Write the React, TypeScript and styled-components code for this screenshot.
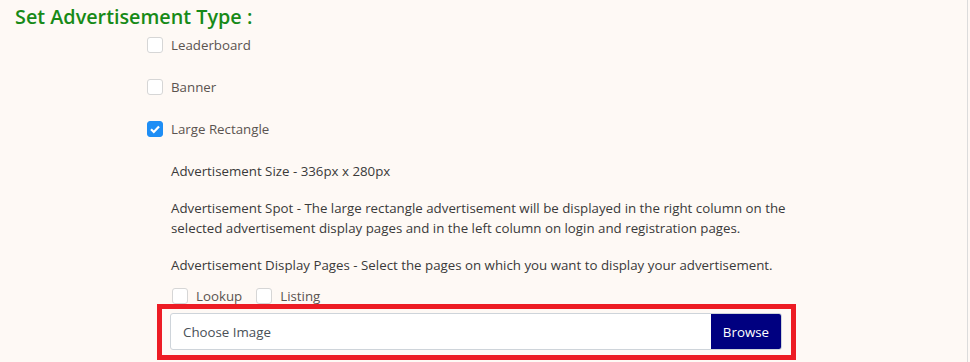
import styled, { createGlobalStyle } from "styled-components";

const GlobalStyle = createGlobalStyle`
  html, body {
    margin: 0;
    padding: 0;
    background: #fef9f5;
  }
`;

const Page = styled.div`
  width: 968px;
  height: 362px;
  box-sizing: border-box;
  border-right: 1px solid #dcdcdc;
  background: #fef9f5;
  font-family: "Open Sans", "Noto Sans", sans-serif;
  color: #333;
  overflow: hidden;
`;

const Heading = styled.h2`
  margin: 0;
  padding: 4px 0 0 15px;
  height: 26px;
  font-size: 19.8px;
  font-weight: 600;
  line-height: 26px;
  color: #178a17;
`;

const Options = styled.div`
  display: flex;
  flex-direction: column;
  gap: 26px;
  padding: 7px 0 0 147px;
`;

const Option = styled.label<{ $inline?: boolean }>`
  display: flex;
  align-items: center;
  gap: 8px;
  height: 16px;
  font-size: 13.3px;
  color: #5b5450;
  margin-right: ${(p) => (p.$inline ? "14px" : "0")};
`;

const Box = styled.span<{ $checked?: boolean }>`
  width: 16px;
  height: 16px;
  box-sizing: border-box;
  border-radius: 3px;
  border: 1px solid ${(p) => (p.$checked ? "#1e8ef5" : "#d6d6d6")};
  background: ${(p) => (p.$checked ? "#1e8ef5" : "#fff")};
  display: flex;
  align-items: center;
  justify-content: center;
  flex: none;
`;

const Details = styled.div`
  padding: 24px 0 0 171px;
  width: 660px;
  font-size: 13.3px;
  line-height: 20px;
  color: #3a3a3a;
`;

const Para = styled.p`
  margin: 0 0 17px;
`;

const PageChoices = styled.div`
  display: flex;
  padding-left: 1px;
  margin-top: -4px;
`;

const Highlight = styled.div`
  margin: 0 0 0 157px;
  width: 639px;
  height: 56px;
  box-sizing: border-box;
  border: 5px solid #ed1c24;
  padding: 4px 9px 5px 8px;
`;

const FileInput = styled.div`
  display: flex;
  height: 37px;
  box-sizing: border-box;
  border: 1px solid #ced4da;
  border-radius: 3px;
  background: #fff;
  overflow: hidden;
`;

const FileLabel = styled.div`
  flex: 1;
  display: flex;
  align-items: center;
  padding-left: 12px;
  font-size: 13.3px;
  color: #495057;
`;

const BrowseButton = styled.div`
  display: flex;
  align-items: center;
  padding: 0 12px;
  background: #000080;
  color: #fff;
  font-size: 13.3px;
`;

function Check({ checked, label, inline }: { checked?: boolean; label: string; inline?: boolean }) {
  return (
    <Option $inline={inline}>
      <Box $checked={checked}>
        {checked && (
          <svg width="12" height="12" viewBox="0 0 12 12">
            <path d="M2 6.2 L4.8 9 L10 3.4" fill="none" stroke="#fff" strokeWidth="2.2" />
          </svg>
        )}
      </Box>
      {label}
    </Option>
  );
}

export default function App() {
  return (
    <>
      <GlobalStyle />
      <Page>
        <Heading>Set Advertisement Type :</Heading>
        <Options>
          <Check label="Leaderboard" />
          <Check label="Banner" />
          <Check label="Large Rectangle" checked />
        </Options>
        <Details>
          <Para>Advertisement Size - 336px x 280px</Para>
          <Para>
            Advertisement Spot - The large rectangle advertisement will be displayed in the right column on the
            selected advertisement display pages and in the left column on login and registration pages.
          </Para>
          <Para>Advertisement Display Pages - Select the pages on which you want to display your advertisement.</Para>
          <PageChoices>
            <Check label="Lookup" inline />
            <Check label="Listing" inline />
          </PageChoices>
        </Details>
        <Highlight>
          <FileInput>
            <FileLabel>Choose Image</FileLabel>
            <BrowseButton>Browse</BrowseButton>
          </FileInput>
        </Highlight>
      </Page>
    </>
  );
}
